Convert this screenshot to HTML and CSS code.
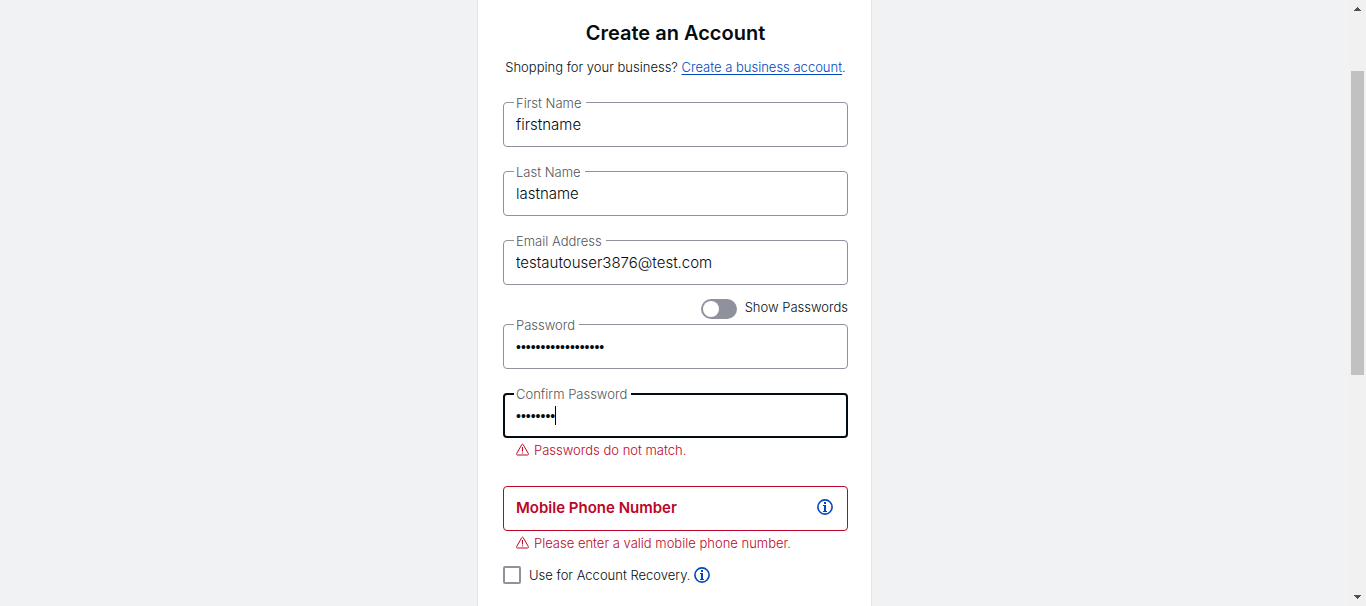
FILE: index.html
```html
<!DOCTYPE html>
<html lang="en">
<head>
<meta charset="utf-8">
<meta name="viewport" content="width=device-width, initial-scale=1">
<title>Create an Account</title>
<link rel="stylesheet" href="styles.css">
</head>
<body>
<svg class="sprite" aria-hidden="true">
  <symbol id="warning" viewBox="0 0 14 14">
    <path d="M5.8 1.6Q6.5.6 7.2 1.6L12.3 10.5Q12.8 11.9 11.5 12H1.5Q.2 11.9.7 10.5Z" fill="none" stroke="currentColor" stroke-width="1" stroke-linejoin="round"/>
    <path d="M6.5 4V8.5M6.5 9.4V10.5" fill="none" stroke="currentColor" stroke-width="1.1"/>
  </symbol>
  <symbol id="info" viewBox="0 0 16 16">
    <circle cx="8" cy="8" r="7.1" fill="none" stroke="currentColor" stroke-width="1.6"/>
    <path d="M7 3H9V5H7ZM6 6H9V12H10V13H6V12H7V7H6Z" fill="currentColor"/>
  </symbol>
</svg>
<div class="page">
  <main class="card">
    <h1 class="title">Create an Account</h1>
    <p class="intro">Shopping for your business? <a class="link" href="#">Create a business account</a>.</p>
    <form class="form">
      <div class="field">
        <input class="input" id="first" type="text" value="firstname">
        <label class="label" for="first">First Name</label>
      </div>
      <div class="field">
        <input class="input" id="last" type="text" value="lastname">
        <label class="label" for="last">Last Name</label>
      </div>
      <div class="field">
        <input class="input" id="email" type="email" value="testautouser3876@test.com">
        <label class="label" for="email">Email Address</label>
      </div>
      <div class="show-row">
        <input class="toggle" id="show" type="checkbox" role="switch">
        <label class="show-label" for="show">Show Passwords</label>
      </div>
      <div class="field">
        <input class="input secret" id="pass" type="password" value="abcdefghijklmnopqr">
        <label class="label" for="pass">Password</label>
      </div>
      <div class="field">
        <input class="input secret active" id="confirm" type="password" value="abcdefgh">
        <label class="label" for="confirm">Confirm Password</label>
        <span class="caret"></span>
      </div>
      <p class="error"><svg class="warn-icon" aria-hidden="true"><use href="#warning"/></svg>Passwords do not match.</p>
      <div class="field phone">
        <input class="input invalid" id="phone" type="tel">
        <label class="phone-label" for="phone">Mobile Phone Number</label>
        <button class="info phone-info" type="button" aria-label="About phone number"><svg class="info-icon"><use href="#info"/></svg></button>
      </div>
      <p class="error"><svg class="warn-icon" aria-hidden="true"><use href="#warning"/></svg>Please enter a valid mobile phone number.</p>
      <div class="recovery">
        <input class="check" id="recovery" type="checkbox">
        <label class="recovery-label" for="recovery">Use for Account Recovery.</label>
        <button class="info" type="button" aria-label="About account recovery"><svg class="info-icon"><use href="#info"/></svg></button>
      </div>
    </form>
  </main>
</div>
<div class="scrollbar" aria-hidden="true">
  <svg class="arrow" viewBox="0 0 7 4" shape-rendering="crispEdges"><path d="M3 0H4V1H5V2H6V3H7V4H0V3H1V2H2V1H3Z"/></svg>
  <div class="track"><div class="thumb"></div></div>
  <svg class="arrow" viewBox="0 0 7 4" shape-rendering="crispEdges"><path d="M0 0H7V1H6V2H5V3H4V4H3V3H2V2H1V1H0Z"/></svg>
</div>
</body>
</html>
```
FILE: styles.css
```css
* { box-sizing: border-box; }

body {
  margin: 0;
  display: flex;
  min-height: 100vh;
  background: #f0f2f4;
  color: #040c13;
  font-family: Inter, "Liberation Sans", sans-serif;
  font-size: 13px;
  font-weight: 300;
  line-height: 20px;
}

.sprite { position: absolute; width: 0; height: 0; }

.page { flex: 1; display: flex; justify-content: center; }

.card {
  width: 100%;
  max-width: 395px;
  padding: 19px 23px 0 25px;
  background: #fff;
  border: solid #e0e6ef;
  border-width: 0 1px;
}

.title {
  margin: 0 0 10px;
  text-align: center;
  font-size: 20px;
  line-height: 28px;
  font-weight: 600;
}

.intro {
  display: flex;
  justify-content: center;
  margin: 0 0 25px;
  white-space: pre;
}
.link { color: #0046be; text-underline-offset: 2px; }

.field { position: relative; }
.field + .field { margin-top: 24px; }

.input {
  display: block;
  width: 100%;
  height: 45px;
  padding: 0 12px;
  border: 1px solid #8f929c;
  border-radius: 4px;
  outline: 0;
  background: #fff;
  color: #040c13;
  font: 300 15px Inter, "Liberation Sans", sans-serif;
}
.secret { font: 14px "Liberation Sans", sans-serif; }
.active { border: 2px solid #040c13; padding: 0 11px; }
.invalid { border-color: #bb0628; }

.label {
  position: absolute;
  top: -7px;
  left: 11px;
  padding: 0 4px 0 2px;
  background: #fff;
  color: #55555a;
  line-height: 16px;
}

.caret {
  position: absolute;
  top: 13px;
  left: 52px;
  width: 1px;
  height: 19px;
  background: #000;
}

.show-row {
  display: flex;
  justify-content: flex-end;
  align-items: flex-start;
  gap: 8px;
  padding: 14px 0 5px;
}
.show-label { line-height: 16px; }

.toggle {
  appearance: none;
  display: flex;
  width: 36px;
  height: 20px;
  margin: 0;
  padding: 2px;
  border-radius: 10px;
  background: #8f929c;
}
.toggle::before {
  content: "";
  width: 16px;
  height: 16px;
  border-radius: 50%;
  background: #fff;
}

.error {
  display: flex;
  align-items: center;
  gap: 4px;
  margin: 2px 0 0;
  padding-left: 13px;
  color: #bb0628;
}
.warn-icon { width: 14px; height: 14px; }

.phone { margin-top: 26px; }
.phone-label {
  position: absolute;
  top: 12px;
  left: 13px;
  color: #bb0628;
  font-size: 15px;
  font-weight: 600;
}

.info {
  display: flex;
  padding: 0;
  border: 0;
  background: none;
  color: #0046be;
}
.info-icon { width: 16px; height: 16px; }
.phone-info { position: absolute; top: 13px; right: 15px; }

.recovery { display: flex; align-items: center; margin-top: 12px; }
.check {
  appearance: none;
  width: 18px;
  height: 18px;
  margin: 0 8px 0 0;
  border: 2px solid #8f929c;
  border-radius: 2px;
}
.recovery-label { margin-right: 4px; }

.scrollbar {
  display: flex;
  flex-direction: column;
  align-items: center;
  width: 17px;
  height: 100vh;
  padding: 7px 0;
  background: #f1f1f1;
}
.arrow { width: 7px; height: 4px; fill: #505050; }
.track { flex: 1; display: flex; padding-top: 60px; }
.thumb { width: 13px; height: 58%; background: #c1c1c1; }
```
